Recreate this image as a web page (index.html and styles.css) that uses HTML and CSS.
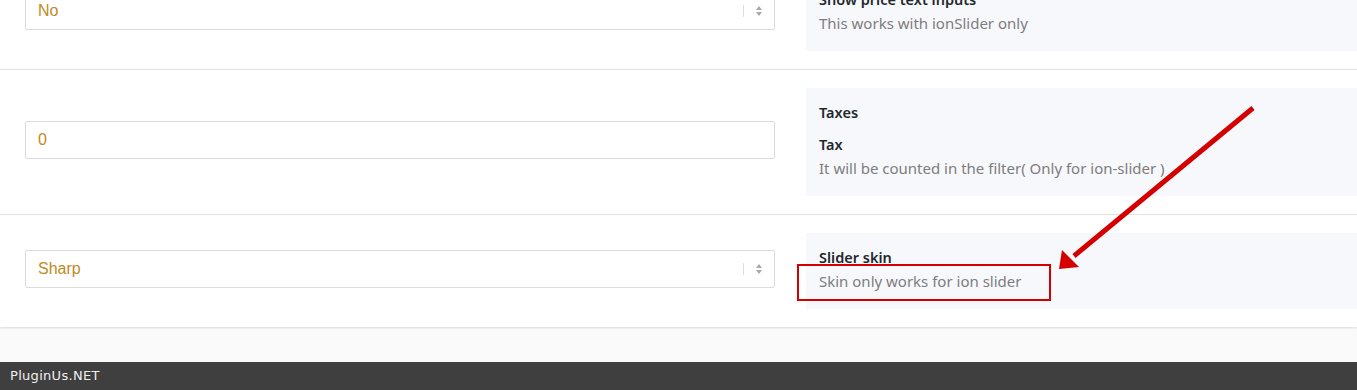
FILE: index.html
```html
<!DOCTYPE html>
<html>
<head>
<meta charset="utf-8">
<link rel="stylesheet" href="styles.css">
</head>
<body>
<div class="panel">
  <div class="row">
    <div class="field">
      <div class="control select"><span class="value">No</span><span class="arrows"><i class="up"></i><i class="down"></i></span></div>
    </div>
    <div class="info">
      <div class="title">Show price text inputs</div>
      <div class="desc">This works with ionSlider only</div>
    </div>
  </div>
  <div class="row">
    <div class="field">
      <div class="control"><span class="value">0</span></div>
    </div>
    <div class="info">
      <div class="title section">Taxes</div>
      <div class="title">Tax</div>
      <div class="desc">It will be counted in the filter( Only for ion-slider )</div>
    </div>
  </div>
  <div class="row">
    <div class="field">
      <div class="control select"><span class="value">Sharp</span><span class="arrows"><i class="up"></i><i class="down"></i></span></div>
    </div>
    <div class="info">
      <div class="title">Slider skin</div>
      <div class="desc">Skin only works for ion slider</div>
    </div>
  </div>
</div>
<div class="footer">PluginUs.NET</div>
<div class="highlight"></div>
<svg class="arrow" width="1357" height="390" viewBox="0 0 1357 390">
  <line x1="1253" y1="108" x2="1074" y2="256" stroke="#d40000" stroke-width="5"/>
  <polygon points="1059,269 1062,250 1079,267" fill="#d40000"/>
</svg>
</body>
</html>
```
FILE: styles.css
```css
html, body {
  margin: 0;
  padding: 0;
  background: #fafafa;
  overflow: hidden;
}
body {
  width: 1357px;
  height: 390px;
  position: relative;
}
.panel {
  margin-top: -43px;
  background: #fff;
  box-shadow: 0 1px 2px rgba(0,0,0,0.12);
}
.row {
  display: flex;
  align-items: center;
  padding: 18px 0 18px 25px;
  border-bottom: 1px solid #e2e2e2;
  gap: 31px;
}
.row:last-child {
  border-bottom: none;
}
.field {
  width: 750px;
  flex: none;
  padding-bottom: 5px;
}
.control {
  box-sizing: border-box;
  height: 38px;
  border: 1px solid #dcdcdc;
  border-radius: 2px;
  display: flex;
  align-items: center;
  padding-left: 12px;
  font-family: "Liberation Sans", Arial, sans-serif;
  font-size: 16px;
  color: #bf8a26;
  background: #fff;
}
.value {
  flex: 1;
}
.arrows {
  width: 30px;
  height: 12px;
  border-left: 1px solid #ddd;
  display: flex;
  flex-direction: column;
  align-items: center;
  justify-content: center;
  gap: 2px;
}
.arrows i {
  display: block;
  width: 0;
  height: 0;
  border-left: 3px solid transparent;
  border-right: 3px solid transparent;
}
.arrows .up {
  border-bottom: 4px solid #a8a8a8;
}
.arrows .down {
  border-top: 4px solid #a8a8a8;
}
.info {
  flex: 1;
  background: #f7f8fc;
  padding: 12px 13px 16px;
  font-family: "Noto Sans", "Open Sans", sans-serif;
  font-size: 15px;
  line-height: 24px;
}
.title {
  color: #23282d;
  font-weight: 600;
  font-size: 14.5px;
}
.title.section {
  margin-bottom: 8px;
}
.desc {
  color: #7d7d7d;
}
.footer {
  margin-top: 35px;
  height: 28px;
  background: #3f3f3f;
  color: #f0f0f0;
  font-family: "DejaVu Sans", sans-serif;
  font-size: 13px;
  letter-spacing: 0.3px;
  line-height: 28px;
  padding-left: 10px;
}
.highlight {
  position: absolute;
  left: 797px;
  top: 264px;
  width: 250px;
  height: 33px;
  border: 2px solid #d40000;
}
.arrow {
  position: absolute;
  left: 0;
  top: 0;
  pointer-events: none;
}
```
